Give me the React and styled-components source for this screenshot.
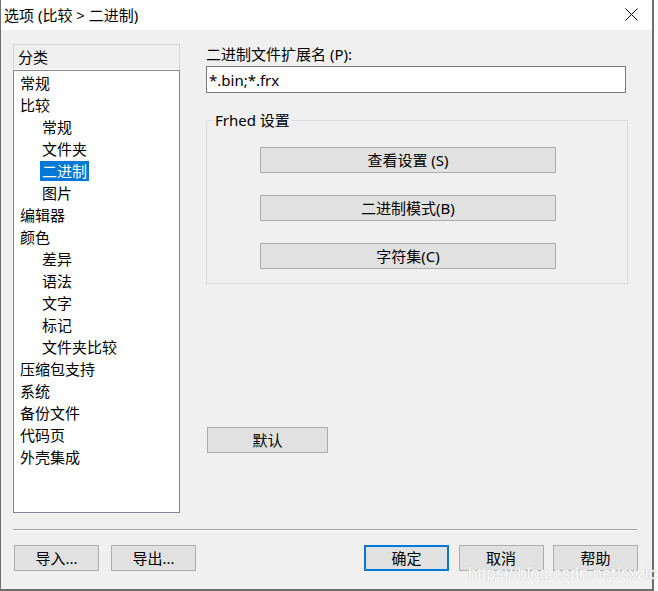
import React from 'react'
import styled, { createGlobalStyle } from 'styled-components'

const GlobalStyle = createGlobalStyle`
    html, body {
        margin: 0;
        padding: 0;
        background: #fdfdfd;
    }
    body {
        font-family: "Noto Sans", "Noto Sans CJK SC", sans-serif;
        font-size: 15px;
        color: #000;
    }
`

const Window = styled.div`
    position: relative;
    box-sizing: border-box;
    width: 654px;
    height: 591px;
    display: flex;
    flex-direction: column;
    border-left: 1px solid #707070;
    border-right: 2px solid #6e6e6e;
    border-bottom: 2px solid #6e6e6e;
    background: #f0f0f0;
`

const TitleBar = styled.div`
    height: 30px;
    display: flex;
    align-items: center;
    justify-content: space-between;
    padding-left: 3px;
    background: #ffffff;
    line-height: 20px;
`

const CloseButton = styled.div`
    width: 42px;
    height: 30px;
    display: flex;
    align-items: center;
    justify-content: center;
    padding-bottom: 2px;
    box-sizing: border-box;
`

const Body = styled.div`
    flex: 1;
    display: flex;
    flex-direction: column;
    padding: 14px 15px 0 12px;
`

const Main = styled.div`
    display: flex;
`

const Sidebar = styled.div`
    width: 167px;
    display: flex;
    flex-direction: column;
`

const SidebarHeader = styled.div`
    box-sizing: border-box;
    height: 26px;
    padding-left: 4px;
    line-height: 24px;
    border: 1px solid #d4d4d4;
    border-bottom-color: #ffffff;
`

const List = styled.div`
    box-sizing: border-box;
    height: 443px;
    padding: 1px 0 0 4px;
    background: #ffffff;
    border: 1px solid #828790;
    display: flex;
    flex-direction: column;
    align-items: flex-start;
`

const Item = styled.span`
    display: inline-block;
    margin: 1px 0 1px ${p => (p.$child ? '22px' : '0')};
    padding: 0 2px;
    line-height: 20px;
    background: ${p => (p.$selected ? '#0078d7' : 'transparent')};
    color: ${p => (p.$selected ? '#ffffff' : '#000000')};
`

const Content = styled.div`
    width: 422px;
    margin-left: 26px;
    display: flex;
    flex-direction: column;
    align-items: flex-start;
`

const FieldLabel = styled.div`
    line-height: 20px;
`

const TextInput = styled.input`
    box-sizing: border-box;
    width: 420px;
    height: 27px;
    margin-top: 2px;
    padding: 0 2px;
    border: 1px solid #7a7a7a;
    background: #ffffff;
    font: inherit;
    line-height: 20px;
    outline: none;
`

const Group = styled.fieldset`
    box-sizing: border-box;
    width: 422px;
    min-inline-size: auto;
    margin: 17px 0 0 0;
    padding: 0 0 14px 0;
    border: 1px solid #dcdcdc;
`

const GroupTitle = styled.legend`
    margin-left: 6px;
    padding: 0 2px;
    line-height: 20px;
`

const GroupButtons = styled.div`
    display: flex;
    flex-direction: column;
    gap: 22px;
    padding: 17px 0 0 53px;
`

const Button = styled.button`
    box-sizing: border-box;
    width: 85px;
    height: 26px;
    padding: 0;
    font: inherit;
    line-height: 20px;
    color: #000;
    background: #e1e1e1;
    border: ${p => (p.$default ? '2px solid #0078d7' : '1px solid #adadad')};
`

const GroupButton = styled(Button)`
    width: 296px;
`

const ResetButton = styled(Button)`
    width: 121px;
    margin: 143px 0 0 1px;
`

const Separator = styled.div`
    height: 1px;
    margin-top: 16px;
    background: #a0a0a0;
    border-bottom: 1px solid #ffffff;
`

const Footer = styled.div`
    display: flex;
    align-items: center;
    justify-content: space-between;
    margin: 14px -1px 0 1px;
`

const ButtonRow = styled.div`
    display: flex;
    gap: ${p => p.$gap || '10px'};
`

const Watermark = styled.div`
    position: absolute;
    left: 467px;
    top: 562px;
    white-space: nowrap;
    font-family: "Liberation Sans", Arial, sans-serif;
    font-size: 16.5px;
    line-height: 22px;
    color: #ffffff;
    text-shadow: 0 0 1px #b8b8b8, 0 0 1px #c8c8c8;
    pointer-events: none;
`

const categories = [
    { label: '常规' },
    { label: '比较' },
    { label: '常规', child: true },
    { label: '文件夹', child: true },
    { label: '二进制', child: true, selected: true },
    { label: '图片', child: true },
    { label: '编辑器' },
    { label: '颜色' },
    { label: '差异', child: true },
    { label: '语法', child: true },
    { label: '文字', child: true },
    { label: '标记', child: true },
    { label: '文件夹比较', child: true },
    { label: '压缩包支持' },
    { label: '系统' },
    { label: '备份文件' },
    { label: '代码页' },
    { label: '外壳集成' },
]

const App = () => (
    <>
        <GlobalStyle />
        <Window>
            <TitleBar>
                <span>选项 (比较 &gt; 二进制)</span>
                <CloseButton>
                    <svg width="13" height="13" viewBox="0 0 13 13">
                        <path d="M0.5 0.5 L12.5 12.5 M12.5 0.5 L0.5 12.5" stroke="#000" strokeWidth="1" />
                    </svg>
                </CloseButton>
            </TitleBar>
            <Body>
                <Main>
                    <Sidebar>
                        <SidebarHeader>分类</SidebarHeader>
                        <List>
                            {categories.map((c, i) => (
                                <Item key={i} $child={c.child} $selected={c.selected}>
                                    {c.label}
                                </Item>
                            ))}
                        </List>
                    </Sidebar>
                    <Content>
                        <FieldLabel>二进制文件扩展名 (P):</FieldLabel>
                        <TextInput defaultValue="*.bin;*.frx" />
                        <Group>
                            <GroupTitle>Frhed 设置</GroupTitle>
                            <GroupButtons>
                                <GroupButton>查看设置 (S)</GroupButton>
                                <GroupButton>二进制模式(B)</GroupButton>
                                <GroupButton>字符集(C)</GroupButton>
                            </GroupButtons>
                        </Group>
                        <ResetButton>默认</ResetButton>
                    </Content>
                </Main>
                <Separator />
                <Footer>
                    <ButtonRow $gap="12px">
                        <Button>导入...</Button>
                        <Button>导出...</Button>
                    </ButtonRow>
                    <ButtonRow $gap="9.5px">
                        <Button $default>确定</Button>
                        <Button>取消</Button>
                        <Button>帮助</Button>
                    </ButtonRow>
                </Footer>
            </Body>
            <Watermark>https://blog.csdn.net/sxzlc</Watermark>
        </Window>
    </>
)

export default App
